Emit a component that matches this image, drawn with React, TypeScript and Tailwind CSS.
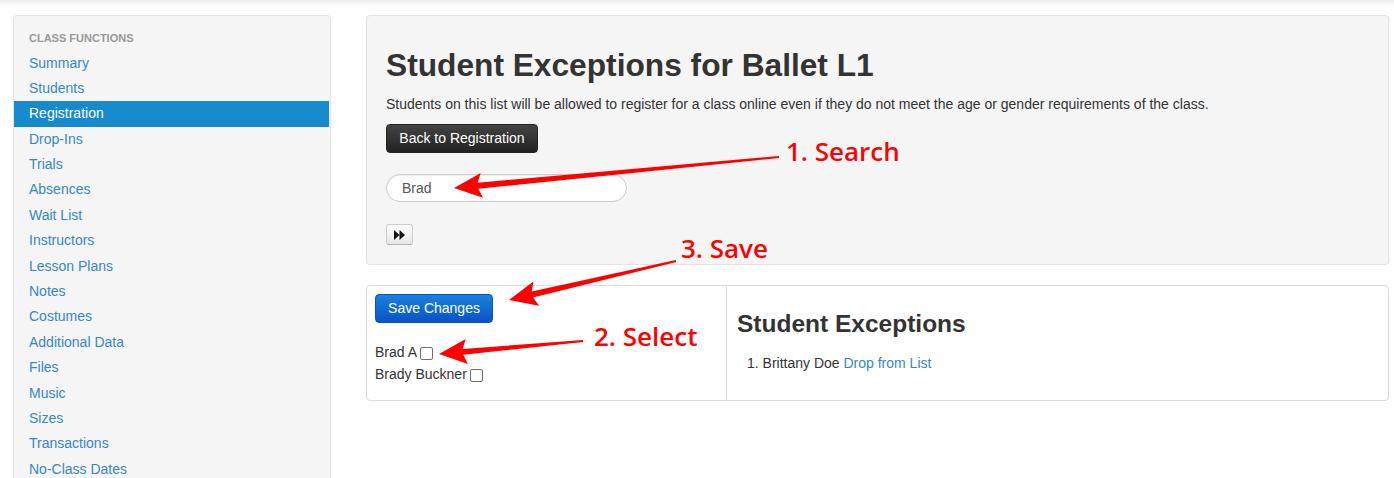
import React from "react";

const navItems = [
  "Summary",
  "Students",
  "Registration",
  "Drop-Ins",
  "Trials",
  "Absences",
  "Wait List",
  "Instructors",
  "Lesson Plans",
  "Notes",
  "Costumes",
  "Additional Data",
  "Files",
  "Music",
  "Sizes",
  "Transactions",
  "No-Class Dates",
];

type Pt = [number, number];

// tapered annotation arrow, tail -> tip
const arrowPoints = (tail: Pt, tip: Pt) => {
  const dx = tip[0] - tail[0];
  const dy = tip[1] - tail[1];
  const len = Math.hypot(dx, dy);
  const d: Pt = [dx / len, dy / len];
  const n: Pt = [-d[1], d[0]];
  const L = 28;
  const W = 12.5;
  const base: Pt = [tip[0] - d[0] * L, tip[1] - d[1] * L];
  const notch: Pt = [tip[0] - d[0] * (L - 4), tip[1] - d[1] * (L - 4)];
  const pts: Pt[] = [
    tip,
    [base[0] + n[0] * W, base[1] + n[1] * W],
    [notch[0] + n[0] * 3, notch[1] + n[1] * 3],
    [tail[0] + n[0] * 1, tail[1] + n[1] * 1],
    [tail[0] - n[0] * 1, tail[1] - n[1] * 1],
    [notch[0] - n[0] * 3, notch[1] - n[1] * 3],
    [base[0] - n[0] * W, base[1] - n[1] * W],
  ];
  return pts.map((p) => `${p[0].toFixed(1)},${p[1].toFixed(1)}`).join(" ");
};

const Checkbox = () => (
  <input
    type="checkbox"
    className="appearance-none w-[13px] h-[13px] ml-[3px] mt-[6px] border border-[#707070] rounded-[2px] bg-white align-middle"
  />
);

const App = () => {
  return (
    <div className="relative w-full h-[478px] overflow-hidden bg-white font-['Liberation_Sans',Arial,sans-serif] text-[14px] text-[#333]">
      {/* navbar shadow */}
      <div className="h-[6px] bg-gradient-to-b from-[#ececec] to-white" />

      <div className="flex gap-[35px] pl-[13px] pr-[5px] pt-[9px]">
        {/* Sidebar */}
        <div className="w-[318px] shrink-0 h-[480px] bg-[#f5f5f5] border border-[#e3e3e3] rounded-[4px]">
          <div className="h-[34.5px] pt-[16px] pl-[15px] text-[11px] leading-[12px] font-bold text-[#999] uppercase">
            Class Functions
          </div>
          {navItems.map((item) => (
            <div
              key={item}
              className={`h-[25.4px] leading-[25.4px] pl-[15px] mr-[1px] ${
                item === "Registration" ? "bg-[#168acd] text-white" : "text-[#3587c9]"
              }`}
            >
              {item}
            </div>
          ))}
        </div>

        {/* Main */}
        <div className="flex-1 flex flex-col gap-[20px]">
          <div className="bg-[#f5f5f5] border border-[#e3e3e3] rounded-[4px] pl-[19px] pt-[29px] pb-[19px]">
            <h1 className="text-[31.7px] leading-[40px] font-bold text-[#333]">
              Student Exceptions for Ballet L1
            </h1>
            <p className="mt-[9px] leading-[20px]">
              Students on this list will be allowed to register for a class online even if they do not meet the age or gender requirements of the class.
            </p>
            <button className="mt-[10px] h-[29px] w-[152px] rounded-[4px] border border-[#222] bg-gradient-to-b from-[#444] to-[#222] text-white text-[14px]">
              Back to Registration
            </button>
            <div className="mt-[21px] w-[241px] h-[28px] rounded-full border border-[#ccc] bg-white pl-[15px] leading-[26px] text-[#555] shadow-[inset_0_1px_1px_rgba(0,0,0,0.075)]">
              Brad
            </div>
            <button className="mt-[22px] flex items-center justify-center w-[27px] h-[21px] rounded-[3px] border border-[#ccc] border-b-[#b3b3b3] bg-gradient-to-b from-white to-[#e6e6e6]">
              <svg width="11" height="10" viewBox="0 0 11 10">
                <path d="M0 0 L5.5 5 L0 10 Z M5.5 0 L11 5 L5.5 10 Z" fill="#111" />
              </svg>
            </button>
          </div>

          <div className="flex h-[116px] bg-white border border-[#ddd] rounded-[4px]">
            <div className="w-[360px] border-r border-[#ddd] pl-[8px] pt-[8px]">
              <button className="h-[29px] w-[118px] rounded-[4px] border border-[#0b4fc4] bg-gradient-to-b from-[#1a82dc] to-[#0b52c8] text-white text-[14px]">
                Save Changes
              </button>
              <div className="mt-[18px] leading-[22px] flex items-start">
                <span>Brad A</span>
                <Checkbox />
              </div>
              <div className="leading-[22px] flex items-start">
                <span>Brady Buckner</span>
                <Checkbox />
              </div>
            </div>
            <div className="flex-1 pl-[10px] pt-[23px]">
              <h2 className="text-[24.5px] leading-[30px] font-bold">Student Exceptions</h2>
              <div className="mt-[14px] ml-[10px] leading-[20px]">
                1. Brittany Doe <span className="text-[#3587c9]">Drop from List</span>
              </div>
            </div>
          </div>
        </div>
      </div>

      {/* Annotations */}
      <svg className="absolute inset-0 pointer-events-none" width="1394" height="478">
        <g fill="#ff0000">
          <polygon points={arrowPoints([779, 157], [454, 188])} />
          <polygon points={arrowPoints([676, 261], [509, 300])} />
          <polygon points={arrowPoints([583, 341], [439, 354])} />
        </g>
      </svg>
      <div className="absolute left-[786px] top-[133px] text-[26px] leading-[36px] font-semibold text-[#ff0000] font-['Open_Sans',sans-serif] [text-shadow:0_0_3px_#fff]">
        1. Search
      </div>
      <div className="absolute left-[681px] top-[230px] text-[26px] leading-[36px] font-semibold text-[#ff0000] font-['Open_Sans',sans-serif] [text-shadow:0_0_3px_#fff]">
        3. Save
      </div>
      <div className="absolute left-[594px] top-[318px] text-[26px] leading-[36px] font-semibold text-[#ff0000] font-['Open_Sans',sans-serif] [text-shadow:0_0_3px_#fff]">
        2. Select
      </div>
    </div>
  );
};

export default App;
